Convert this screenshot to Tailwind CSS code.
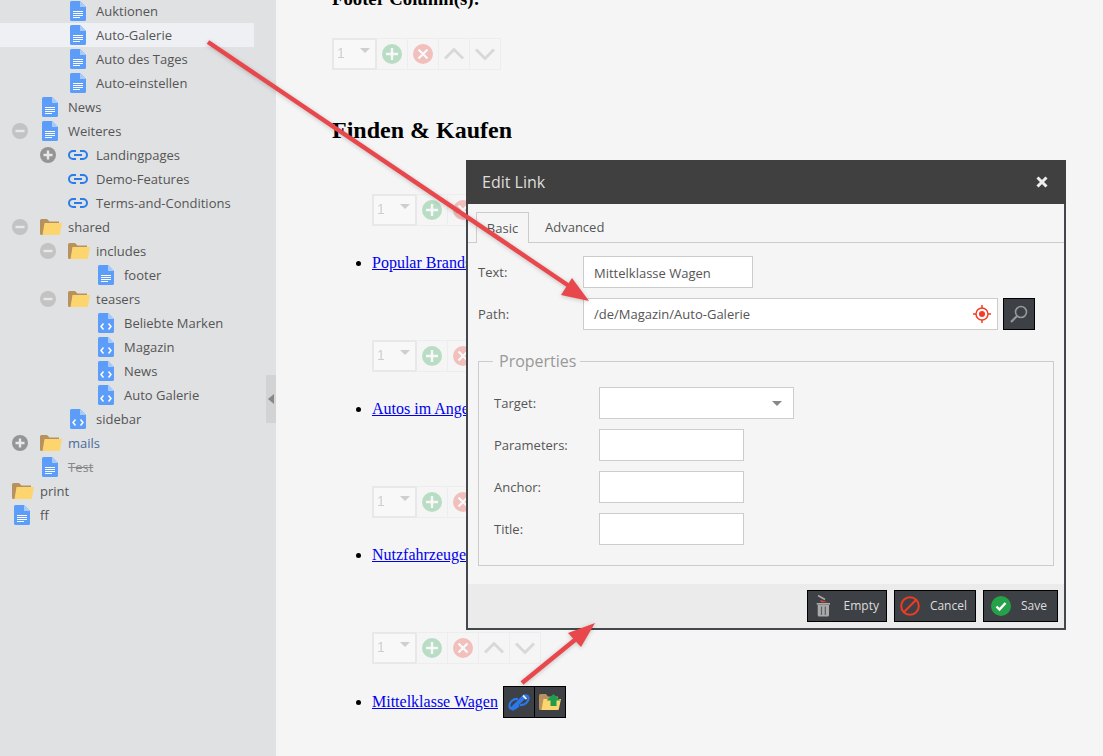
<!DOCTYPE html>
<html lang="de">
  <head>
    <meta charset="UTF-8">
    <title>Edit Link</title>
    <script src="https://cdn.jsdelivr.net/npm/@tailwindcss/browser@4"></script>
  </head>
  <body class="relative h-[756px] w-[1103px] overflow-hidden bg-[#f5f5f5] font-['Open_Sans',sans-serif] text-[13px] text-[#555]">
    <svg class="hidden">
      <symbol id="doc" viewBox="0 0 16 20">
        <path d="M1.500 0H10L16 6V18.500A1.500 1.500 0 0 1 14.500 20H1.500A1.500 1.500 0 0 1 0 18.500V1.500A1.500 1.500 0 0 1 1.500 0Z" fill="#5b9df9"/>
        <path d="M10 0L16 6H10Z" fill="#a9cbfb"/>
        <path d="M3 10.500H13M3 12.500H13M3 14.500H13M3 16.500H10" stroke="#fff" fill="none"/>
      </symbol>
      <symbol id="code" viewBox="0 0 16 20">
        <path d="M1.500 0H10L16 6V18.500A1.500 1.500 0 0 1 14.500 20H1.500A1.500 1.500 0 0 1 0 18.500V1.500A1.500 1.500 0 0 1 1.500 0Z" fill="#5b9df9"/>
        <path d="M10 0L16 6H10Z" fill="#a9cbfb"/>
        <path d="M5.500 10.500L3 13.500L5.500 16.500M10.500 10.500L13 13.500L10.500 16.500" stroke="#fff" stroke-width="1.500" fill="none"/>
      </symbol>
      <symbol id="link" viewBox="0 0 20 10">
        <path d="M8 1H5A4 4 0 0 0 5 9H8M12 1H15A4 4 0 0 1 15 9H12" stroke="#2a7de9" stroke-width="2" fill="none"/>
        <path d="M6 5H14" stroke="#2a7de9" stroke-width="2" fill="none"/>
      </symbol>
      <symbol id="folder" viewBox="0 0 22 16">
        <path d="M0 1.500A1.500 1.500 0 0 1 1.500 0H7L9.500 2.500H19V6H5L3 16H1.500A1.500 1.500 0 0 1 0 14.500Z" fill="#b8925e"/>
        <path d="M4.500 4H22L20 14.500A1.500 1.500 0 0 1 18.500 16H2.500Z" fill="#fdd56f"/>
      </symbol>
      <symbol id="plus" viewBox="0 0 16 16">
        <circle cx="8" cy="8" r="8" fill="#959595"/>
        <path d="M8 3.500V12.500M3.500 8H12.500" stroke="#e8e8e8" stroke-width="2.400"/>
      </symbol>
      <symbol id="minus" viewBox="0 0 16 16">
        <circle cx="8" cy="8" r="8" fill="#c3c3c3"/>
        <path d="M3.500 8H12.500" stroke="#e8e8e8" stroke-width="2.400"/>
      </symbol>
      <symbol id="toolbar" viewBox="0 0 169 32">
        <rect x="1" y="1" width="43" height="30" fill="#fff" stroke="#ccc" stroke-width="2"/>
        <path d="M44 .5H168.500V31.500H44M75.500 0V32M106.500 0V32M137.500 0V32" fill="none" stroke="#ddd"/>
        <path d="M28 10H38L33 15Z" fill="#777"/>
        <circle cx="60" cy="16" r="10" fill="#2fa655"/>
        <path d="M60 10V22M54 16H66" stroke="#fff" stroke-width="2.400"/>
        <circle cx="91" cy="16" r="10" fill="#e8443a"/>
        <path d="M86.500 11.500L95.500 20.500M95.500 11.500L86.500 20.500" stroke="#fff" stroke-width="2.400"/>
        <path d="M113 20.500L122 11.500L131 20.500" stroke="#999" stroke-width="3" fill="none"/>
        <path d="M144 11.500L153 20.500L162 11.500" stroke="#999" stroke-width="3" fill="none"/>
      </symbol>
    </svg>

    <div class="flex h-full">
      <aside class="w-[276px] shrink-0 overflow-hidden bg-[#e0e1e3]">
        <div class="-mt-px w-[254px]">
          <div class="flex h-6 items-center pl-[70px]"><svg class="mr-[10px] h-5 w-4"><use href="#doc"/></svg><span class="pt-[2px]">Auktionen</span></div>
          <div class="flex h-6 items-center bg-[#eef0f3] pl-[70px]"><svg class="mr-[10px] h-5 w-4"><use href="#doc"/></svg><span class="pt-[2px]">Auto-Galerie</span></div>
          <div class="flex h-6 items-center pl-[70px]"><svg class="mr-[10px] h-5 w-4"><use href="#doc"/></svg><span class="pt-[2px]">Auto des Tages</span></div>
          <div class="flex h-6 items-center pl-[70px]"><svg class="mr-[10px] h-5 w-4"><use href="#doc"/></svg><span class="pt-[2px]">Auto-einstellen</span></div>
          <div class="flex h-6 items-center pl-[42px]"><svg class="mr-[10px] h-5 w-4"><use href="#doc"/></svg><span class="pt-[2px]">News</span></div>
          <div class="flex h-6 items-center pl-[12px]"><svg class="mr-[14px] h-4 w-4"><use href="#minus"/></svg><svg class="mr-[10px] h-5 w-4"><use href="#doc"/></svg><span class="pt-[2px]">Weiteres</span></div>
          <div class="flex h-6 items-center pl-[40px]"><svg class="mr-3 h-4 w-4"><use href="#plus"/></svg><svg class="mr-2 h-[10px] w-5"><use href="#link"/></svg><span class="pt-[2px]">Landingpages</span></div>
          <div class="flex h-6 items-center pl-[68px]"><svg class="mr-2 h-[10px] w-5"><use href="#link"/></svg><span class="pt-[2px]">Demo-Features</span></div>
          <div class="flex h-6 items-center pl-[68px]"><svg class="mr-2 h-[10px] w-5"><use href="#link"/></svg><span class="pt-[2px]">Terms-and-Conditions</span></div>
          <div class="flex h-6 items-center pl-[12px]"><svg class="mr-3 h-4 w-4"><use href="#minus"/></svg><svg class="mr-[6px] h-4 w-[22px]"><use href="#folder"/></svg><span class="pt-[2px]">shared</span></div>
          <div class="flex h-6 items-center pl-[40px]"><svg class="mr-3 h-4 w-4"><use href="#minus"/></svg><svg class="mr-[6px] h-4 w-[22px]"><use href="#folder"/></svg><span class="pt-[2px]">includes</span></div>
          <div class="flex h-6 items-center pl-[98px]"><svg class="mr-[10px] h-5 w-4"><use href="#doc"/></svg><span class="pt-[2px]">footer</span></div>
          <div class="flex h-6 items-center pl-[40px]"><svg class="mr-3 h-4 w-4"><use href="#minus"/></svg><svg class="mr-[6px] h-4 w-[22px]"><use href="#folder"/></svg><span class="pt-[2px]">teasers</span></div>
          <div class="flex h-6 items-center pl-[98px]"><svg class="mr-[10px] h-5 w-4"><use href="#code"/></svg><span class="pt-[2px]">Beliebte Marken</span></div>
          <div class="flex h-6 items-center pl-[98px]"><svg class="mr-[10px] h-5 w-4"><use href="#code"/></svg><span class="pt-[2px]">Magazin</span></div>
          <div class="flex h-6 items-center pl-[98px]"><svg class="mr-[10px] h-5 w-4"><use href="#code"/></svg><span class="pt-[2px]">News</span></div>
          <div class="flex h-6 items-center pl-[98px]"><svg class="mr-[10px] h-5 w-4"><use href="#code"/></svg><span class="pt-[2px]">Auto Galerie</span></div>
          <div class="flex h-6 items-center pl-[70px]"><svg class="mr-[10px] h-5 w-4"><use href="#code"/></svg><span class="pt-[2px]">sidebar</span></div>
          <div class="flex h-6 items-center pl-[12px] text-[#4a6a99]"><svg class="mr-3 h-4 w-4"><use href="#plus"/></svg><svg class="mr-[6px] h-4 w-[22px]"><use href="#folder"/></svg><span class="pt-[2px]">mails</span></div>
          <div class="flex h-6 items-center pl-[42px] text-[#888]"><svg class="mr-[10px] h-5 w-4"><use href="#doc"/></svg><span class="pt-[2px] line-through">Test</span></div>
          <div class="flex h-6 items-center pl-[12px]"><svg class="mr-[6px] h-4 w-[22px]"><use href="#folder"/></svg><span class="pt-[2px]">print</span></div>
          <div class="flex h-6 items-center pl-[14px]"><svg class="mr-[10px] h-5 w-4"><use href="#doc"/></svg><span class="pt-[2px]">ff</span></div>
        </div>
      </aside>

      <main class="flex-1 pl-[56px] font-['Liberation_Serif',serif] text-[16px] text-black">
        <h3 class="-mt-[12px] h-[21px] text-[18.720px] leading-[21px] font-bold">Footer Column(s):</h3>

        <div class="relative mt-[29px] h-8 w-[169px] opacity-30">
          <svg class="absolute inset-0 h-8 w-[169px]"><use href="#toolbar"/></svg>
          <span class="absolute top-[7px] left-[5px] font-['Liberation_Sans',sans-serif] text-[14px] leading-4 text-[#777]">1</span>
        </div>

        <h2 class="mt-[46px] h-7 text-[24px] leading-7 font-bold">Finden &amp; Kaufen</h2>

        <div class="mt-[50px] ml-[40px]">
          <div class="relative h-8 w-[169px] opacity-30">
            <svg class="absolute inset-0 h-8 w-[169px]"><use href="#toolbar"/></svg>
            <span class="absolute top-[7px] left-[5px] font-['Liberation_Sans',sans-serif] text-[14px] leading-4 text-[#777]">1</span>
          </div>
          <ul class="mt-[28px] mb-[68px] list-disc"><li class="h-[18px] leading-[18px]"><a href="#" class="text-[#0000ee] underline">Popular Brands</a></li></ul>

          <div class="relative h-8 w-[169px] opacity-30">
            <svg class="absolute inset-0 h-8 w-[169px]"><use href="#toolbar"/></svg>
            <span class="absolute top-[7px] left-[5px] font-['Liberation_Sans',sans-serif] text-[14px] leading-4 text-[#777]">1</span>
          </div>
          <ul class="mt-[28px] mb-[68px] list-disc"><li class="h-[18px] leading-[18px]"><a href="#" class="text-[#0000ee] underline">Autos im Angebot</a></li></ul>

          <div class="relative h-8 w-[169px] opacity-30">
            <svg class="absolute inset-0 h-8 w-[169px]"><use href="#toolbar"/></svg>
            <span class="absolute top-[7px] left-[5px] font-['Liberation_Sans',sans-serif] text-[14px] leading-4 text-[#777]">1</span>
          </div>
          <ul class="mt-[28px] mb-[68px] list-disc"><li class="h-[18px] leading-[18px]"><a href="#" class="text-[#0000ee] underline">Nutzfahrzeuge</a></li></ul>

          <div class="relative h-8 w-[169px] opacity-30">
            <svg class="absolute inset-0 h-8 w-[169px]"><use href="#toolbar"/></svg>
            <span class="absolute top-[7px] left-[5px] font-['Liberation_Sans',sans-serif] text-[14px] leading-4 text-[#777]">1</span>
          </div>
          <ul class="mt-[22px] list-disc">
            <li class="h-8 leading-[32px]"><a href="#" class="text-[#0000ee] underline">Mittelklasse Wagen</a><span class="ml-[5px] inline-flex h-8 align-top"><button class="flex h-8 w-[32px] items-center justify-center border border-black bg-[#3d4145]">
                  <svg class="h-[18px] w-[22px]" viewBox="0 0 22 18"><path d="M10 6C5 5.500 1 9.500 1.500 13.500C2 17 7 16.500 11 12.500M12 12C17 12.500 21 8.500 20.500 4.500C20 2 17 2 15 3" stroke="#2a78ea" stroke-width="2.200" fill="none"/><path d="M3.500 16.500L16 4" stroke="#2a78ea" stroke-width="4.200"/><path d="M15 2.500L18.500 6" stroke="#e6edf7" stroke-width="1.800"/></svg>
                </button><button class="-ml-px flex h-8 w-[32px] items-center justify-center border border-black bg-[#3d4145]">
                  <svg class="h-4 w-[22px]" viewBox="0 0 22 16"><path d="M0 1.500A1.500 1.500 0 0 1 1.500 0H7L9 2.500H19V6H5L3 16H1.500A1.500 1.500 0 0 1 0 14.500Z" fill="#b8925e"/><path d="M4.500 5H22L20 14.500A1.500 1.500 0 0 1 18.500 16H2.500Z" fill="#fdd56f"/><path d="M14.500 0L21.500 6.500H17.500V12H11.500V6.500H7.500Z" fill="#1f9d4d"/></svg>
                </button></span></li>
          </ul>
        </div>
      </main>
    </div>

    <div class="absolute top-[375px] left-[266px] flex h-12 w-[10px] items-center justify-center bg-[#d2d3d5]">
      <span class="h-0 w-0 border-y-[5px] border-r-[6px] border-y-transparent border-r-[#888]"></span>
    </div>

    <!-- dialog -->
    <div class="absolute top-[160px] left-[466px] flex h-[470px] w-[600px] flex-col border-2 border-t-0 border-[#44484c] bg-[#f5f5f5]">
      <div class="-mx-[2px] flex h-[44px] shrink-0 items-center justify-between bg-[#404040] pr-[18px] pl-[16px] text-[16px] text-[#dddddd]">
        <span>Edit Link</span>
        <svg class="h-3 w-3" viewBox="0 0 12 12"><path d="M1.500 1.500L10.500 10.500M10.500 1.500L1.500 10.500" stroke="#eee" stroke-width="3"/></svg>
      </div>
      <div class="flex h-[39px] shrink-0 items-end border-b border-[#ccc] pl-[8px]">
        <div class="-mb-px flex h-[31px] w-[53px] items-center justify-center border border-b-0 border-[#ccc] bg-[#f5f5f5] pt-[2px]">Basic</div>
        <div class="flex h-[30px] items-center pt-[2px] pl-[16px]">Advanced</div>
      </div>
      <div class="flex-1 px-[10px] pt-[13px]">
        <div class="flex h-8 items-center">
          <label class="w-[105px] pt-[2px]">Text:</label>
          <input class="h-8 w-[170px] border border-[#ccc] bg-white px-[10px] pt-[2px] text-[#555]" value="Mittelklasse Wagen">
        </div>
        <div class="mt-[10px] flex h-8 items-center">
          <label class="w-[105px] pt-[2px]">Path:</label>
          <div class="flex h-8 w-[415px] items-center justify-between border border-[#ccc] bg-white pr-[6px] pl-[10px]">
            <span class="pt-[2px]">/de/Magazin/Auto-Galerie</span>
            <svg class="h-[18px] w-[18px]" viewBox="0 0 18 18"><circle cx="9" cy="9" r="6" fill="none" stroke="#f63b25" stroke-width="1.500"/><circle cx="9" cy="9" r="3" fill="#f63b25"/><path d="M9 0V3M9 15V18M0 9H3M15 9H18" stroke="#f63b25" stroke-width="1.500"/></svg>
          </div>
          <button class="ml-[5px] flex h-8 w-8 items-center justify-center border border-black bg-[#3d4145]">
            <svg class="h-[20px] w-[20px]" viewBox="0 0 20 20"><circle cx="12" cy="8" r="5.500" fill="none" stroke="#999" stroke-width="1.600"/><path d="M8 12L2 18" stroke="#999" stroke-width="2.200"/></svg>
          </button>
        </div>

        <fieldset class="mt-[20px] h-[216px] border border-[#ccc] px-[15px] pt-[15px]">
          <legend class="-ml-px h-[22px] pr-[4px] pl-[6px] text-[16px] leading-[22px] text-[#999]">Properties</legend>
          <div class="flex h-8 items-center">
            <label class="w-[105px] pt-[2px]">Target:</label>
            <div class="flex h-8 w-[195px] items-center justify-end border border-[#ccc] bg-white pr-[11px]"><span class="h-0 w-0 border-x-[5px] border-t-[5px] border-x-transparent border-t-[#888]"></span></div>
          </div>
          <div class="mt-[10px] flex h-8 items-center">
            <label class="w-[105px] pt-[2px]">Parameters:</label>
            <input class="h-8 w-[145px] border border-[#ccc] bg-white">
          </div>
          <div class="mt-[10px] flex h-8 items-center">
            <label class="w-[105px] pt-[2px]">Anchor:</label>
            <input class="h-8 w-[145px] border border-[#ccc] bg-white">
          </div>
          <div class="mt-[10px] flex h-8 items-center">
            <label class="w-[105px] pt-[2px]">Title:</label>
            <input class="h-8 w-[145px] border border-[#ccc] bg-white">
          </div>
        </fieldset>
      </div>
      <div class="flex h-[44px] shrink-0 items-center justify-end gap-[7px] bg-[#ebebeb] pr-[6px] text-[12px] text-[#dddddd]">
        <button class="flex h-8 w-[80px] items-center justify-between border border-black bg-[#3d4145] pr-[7px] pl-[8px]">
          <svg class="h-[22px] w-[15px]" viewBox="0 0 15 22"><path d="M2 .5L9 4.500" stroke="#aaa" stroke-width="1.600" fill="none"/><path d="M4 5L12 7.300L5 7.300Z" fill="#e8443a"/><path d="M.7 8H14V9.700H.7Z" fill="#aaa"/><path d="M1.700 10H13V20A1.500 1.500 0 0 1 11.500 21.500H3.200A1.500 1.500 0 0 1 1.700 20Z" fill="#aaa"/><path d="M5.500 11.500V20M9.300 11.500V20" stroke="#5c6064" stroke-width="1.200"/></svg>
          <span>Empty</span>
        </button>
        <button class="flex h-8 w-[82px] items-center justify-between border border-black bg-[#3d4145] pr-[8px] pl-[5px]">
          <svg class="h-5 w-5" viewBox="0 0 20 20"><circle cx="10" cy="10" r="8.800" fill="none" stroke="#ee3b24" stroke-width="2"/><path d="M4 16L16 4" stroke="#ee3b24" stroke-width="2"/></svg>
          <span>Cancel</span>
        </button>
        <button class="flex h-8 w-[75px] items-center justify-between border border-black bg-[#3d4145] pr-[10px] pl-[7px]">
          <svg class="h-5 w-5" viewBox="0 0 20 20"><circle cx="10" cy="10" r="10" fill="#25a249"/><path d="M5.500 10.500L8.500 13.500L14.500 7" fill="none" stroke="#fff" stroke-width="2.400"/></svg>
          <span>Save</span>
        </button>
      </div>
    </div>

    <!-- annotation arrows -->
    <svg class="pointer-events-none absolute inset-0 h-[756px] w-[1103px] drop-shadow-[0_1px_2px_rgba(0,0,0,0.2)]" viewBox="0 0 1103 756">
      <path d="M208 42L572 288" stroke="#e8474c" stroke-width="4.500" fill="none"/>
      <path d="M589 301L561 295L572 278Z" fill="#e8474c"/>
      <path d="M522 683L576 639" stroke="#e8474c" stroke-width="4.500" fill="none"/>
      <path d="M595 623L581 647L568 633Z" fill="#e8474c"/>
    </svg>
  </body>
</html>
